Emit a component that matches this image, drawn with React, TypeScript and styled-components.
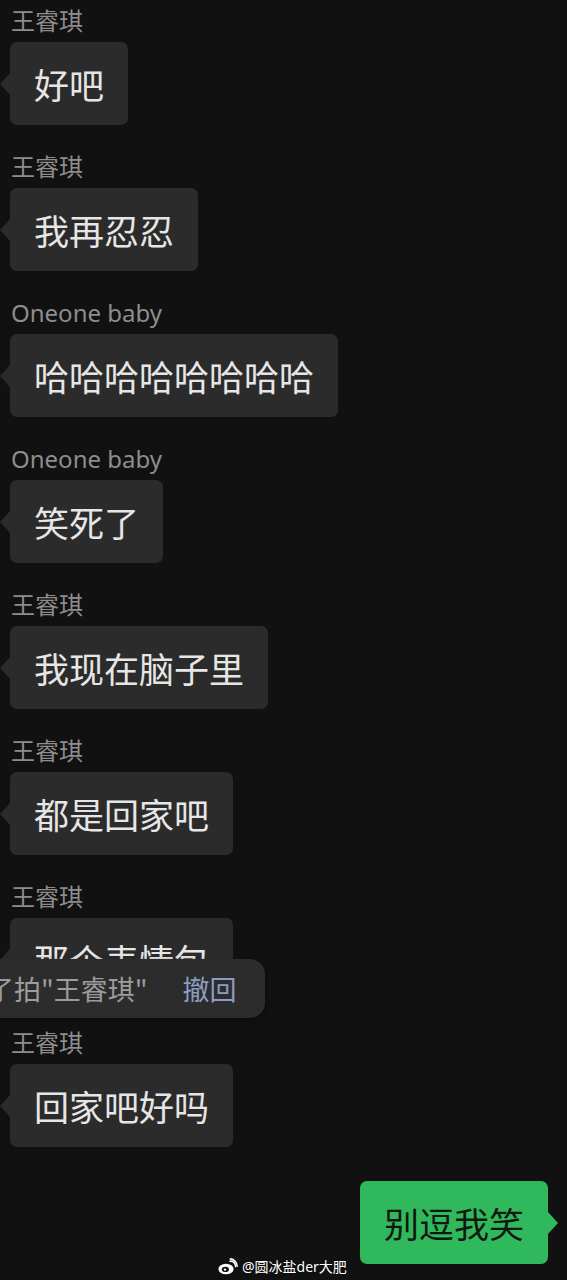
import styled, { createGlobalStyle } from 'styled-components'

const GlobalStyle = createGlobalStyle`
  html, body {
    background: #111111;
    margin: 0;
    padding: 0;
  }

  body {
    font-family: "Noto Sans", "Noto Sans CJK SC", sans-serif;
  }
`

const Page = styled.div`
  background: #111111;
  box-sizing: border-box;
  height: 1280px;
  overflow: hidden;
  padding: 6px 0 0 10px;
  position: relative;
  width: 567px;
`

const Message = styled.div`
  align-items: flex-start;
  display: flex;
  flex-direction: column;
  gap: 7px;
  margin-bottom: 27px;
`

const Name = styled.div`
  color: #8d8d8d;
  font-size: 24px;
  line-height: 29px;
  padding-left: 1px;
`

const Bubble = styled.div<{ $mine?: boolean }>`
  background: ${({ $mine }) => ($mine ? '#30b85d' : '#2b2b2b')};
  border-radius: 7px;
  color: ${({ $mine }) => ($mine ? '#101810' : '#e6e6e6')};
  font-family: "Noto Sans CJK SC", sans-serif;
  font-size: 35px;
  line-height: 49px;
  padding: 17px 24px;
  position: relative;
  white-space: nowrap;

  &::before {
    border-bottom: 11px solid transparent;
    border-top: 11px solid transparent;
    content: '';
    margin-top: -11px;
    position: absolute;
    top: 50%;
    ${({ $mine }) =>
      $mine
        ? 'border-left: 10px solid #30b85d; right: -10px;'
        : 'border-right: 10px solid #2b2b2b; left: -10px;'}
  }
`

const MineRow = styled.div`
  display: flex;
  justify-content: flex-end;
  padding: 7px 19px 0 0;
`

const Toast = styled.div`
  align-items: center;
  background: #2c2c2c;
  border-radius: 0 15px 15px 0;
  box-shadow: 0 2px 6px rgba(0, 0, 0, 0.4);
  display: flex;
  font-family: "Noto Sans CJK SC", sans-serif;
  font-size: 27px;
  gap: 35px;
  height: 59px;
  left: 0;
  overflow: hidden;
  padding-right: 28px;
  position: absolute;
  top: 959px;
`

const ToastText = styled.span`
  color: #9c9c9c;
  margin-left: -40px;
  white-space: nowrap;
`

const Undo = styled.span`
  color: #8c9cc0;
`

const Watermark = styled.div`
  align-items: center;
  color: #ffffff;
  display: flex;
  font-family: "Noto Sans", "Noto Sans CJK SC", sans-serif;
  font-size: 14px;
  gap: 4px;
  left: 218px;
  position: absolute;
  text-shadow: 0 0 2px rgba(0, 0, 0, 0.8);
  top: 1256px;
`

const WeiboIcon = () => (
  <svg width="20" height="17" viewBox="0 0 20 17">
    <ellipse cx="8" cy="11" rx="7.6" ry="5.2" fill="#ffffff" />
    <ellipse cx="7.4" cy="11.4" rx="3.6" ry="2.7" fill="#111111" />
    <circle cx="7" cy="11.6" r="1.2" fill="#ffffff" />
    <path d="M12 3.2 A5 5 0 0 1 17.6 8.6" stroke="#ffffff" strokeWidth="1.6" fill="none" strokeLinecap="round" />
    <path d="M12.4 0.9 A7.6 7.6 0 0 1 19.2 8.2" stroke="#ffffff" strokeWidth="1.6" fill="none" strokeLinecap="round" />
  </svg>
)

const messages = [
  { name: '王睿琪', text: '好吧' },
  { name: '王睿琪', text: '我再忍忍' },
  { name: 'Oneone baby', text: '哈哈哈哈哈哈哈哈' },
  { name: 'Oneone baby', text: '笑死了' },
  { name: '王睿琪', text: '我现在脑子里' },
  { name: '王睿琪', text: '都是回家吧' },
  { name: '王睿琪', text: '那个表情包' },
  { name: '王睿琪', text: '回家吧好吗' },
]

export default function App() {
  return (
    <>
      <GlobalStyle />
      <Page>
        {messages.map(({ name, text }, index) => (
          <Message key={index}>
            <Name>{name}</Name>
            <Bubble>{text}</Bubble>
          </Message>
        ))}
        <MineRow>
          <Bubble $mine>别逗我笑</Bubble>
        </MineRow>
        <Toast>
          <ToastText>拍了拍"王睿琪"</ToastText>
          <Undo>撤回</Undo>
        </Toast>
        <Watermark>
          <WeiboIcon />
          @圆冰盐der大肥
        </Watermark>
      </Page>
    </>
  )
}
